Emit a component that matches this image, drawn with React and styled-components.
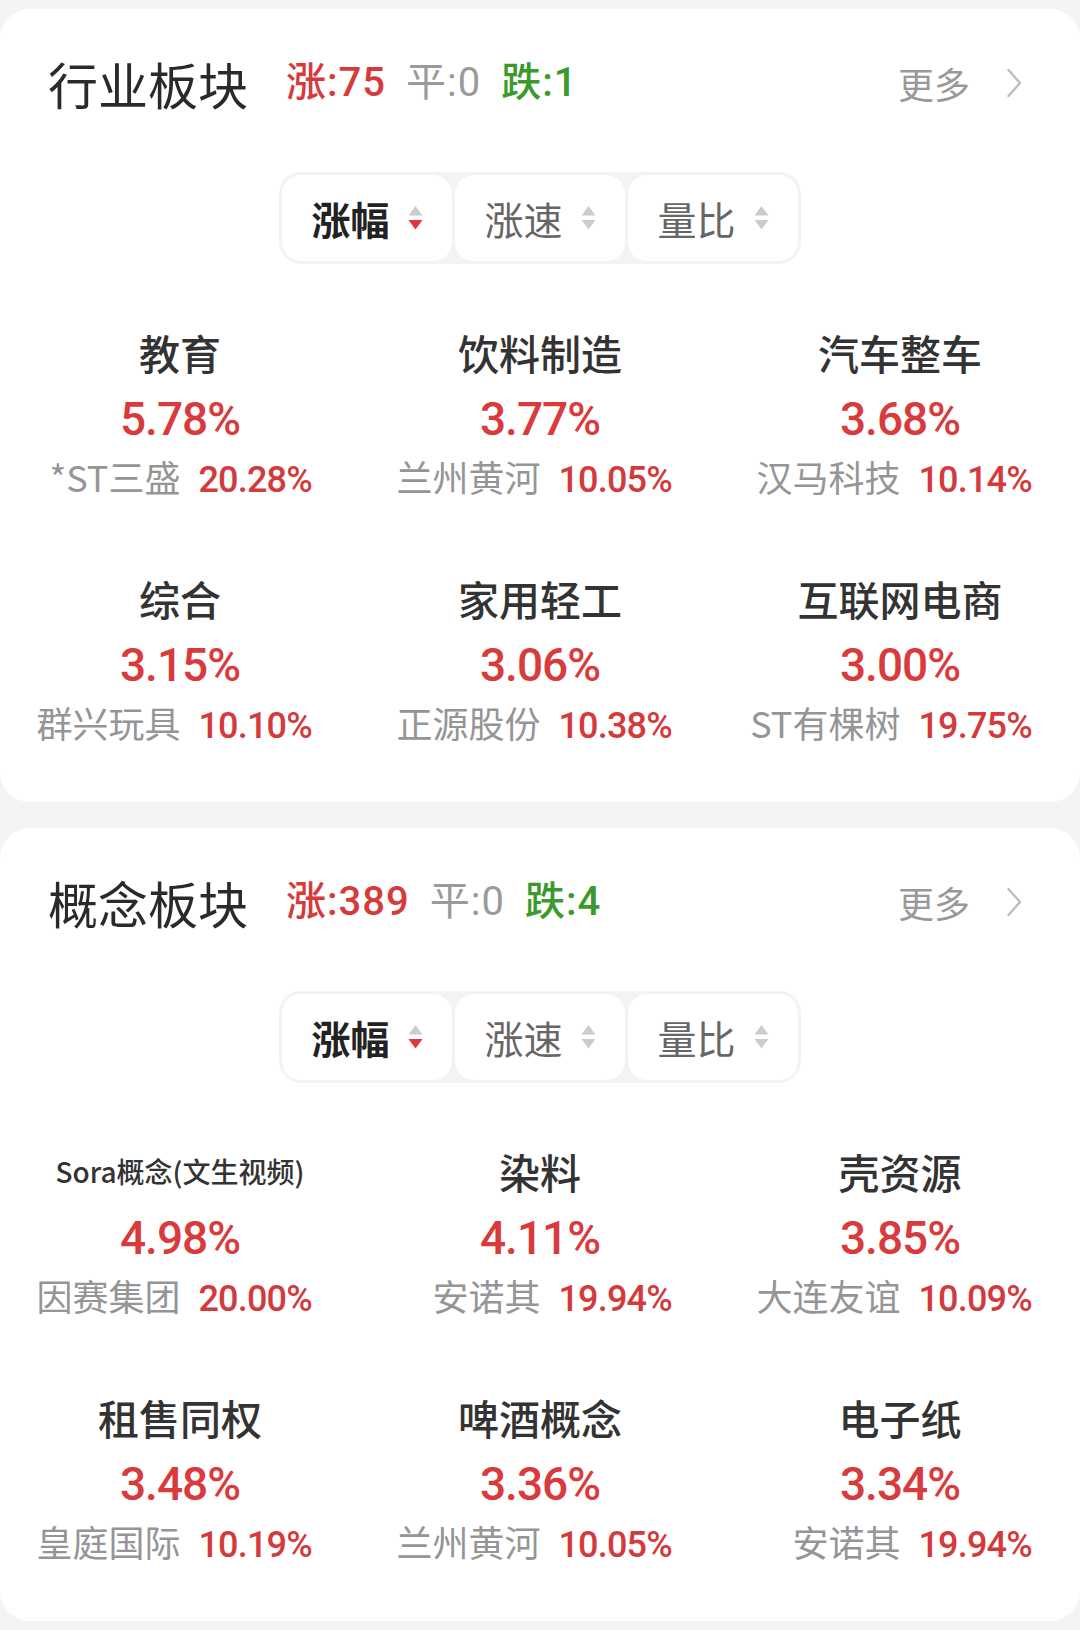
import React from "react";
import styled, { createGlobalStyle } from "styled-components";

const GlobalStyle = createGlobalStyle`
  html, body { margin: 0; padding: 0; background: #f4f4f4; }
  body {
    font-family: "Noto Sans CJK SC", "Noto Sans", sans-serif;
    -webkit-font-smoothing: antialiased;
  }
`;

const NUM = `"Roboto", "Noto Sans CJK SC", sans-serif`;

const Page = styled.div`
  display: flex;
  flex-direction: column;
  gap: 26px;
  padding: 9px 0 8px;
`;

const Card = styled.section`
  background: #fff;
  border-radius: 30px;
  height: 793px;
  box-sizing: border-box;
  padding: 44px 0 57px;
`;

const Header = styled.div`
  display: flex;
  align-items: center;
  height: 60px;
  padding: 0 58px 0 48px;
`;

const Title = styled.h2`
  margin: 0;
  font-size: 50px;
  line-height: 60px;
  font-weight: 400;
  color: #2a2a2a;
`;

const Stats = styled.div`
  display: flex;
  align-items: center;
  gap: 20px;
  margin-left: 38px;
`;

const toneColor = { up: "#d63b3b", flat: "#9a9a9a", down: "#3a9a2c" };

const Stat = styled.span`
  font-family: ${NUM};
  font-size: 40px;
  line-height: 60px;
  letter-spacing: 1px;
  font-weight: ${(p) => (p.$tone === "flat" ? 400 : 500)};
  color: ${(p) => toneColor[p.$tone]};
`;

const More = styled.div`
  margin-left: auto;
  display: flex;
  align-items: center;
  gap: 36px;
  font-size: 36px;
  color: #999;
`;

const TabsRow = styled.div`
  display: flex;
  justify-content: center;
  margin-top: 59px;
`;

const Tabs = styled.div`
  display: flex;
  gap: 3px;
  padding: 3px;
  background: #f3f3f3;
  border-radius: 22px;
`;

const Tab = styled.div`
  width: 170px;
  height: 86px;
  background: #fff;
  border-radius: 19px;
  display: flex;
  align-items: center;
  justify-content: center;
  gap: 18px;
  font-size: 39px;
  font-weight: ${(p) => (p.$active ? 700 : 400)};
  color: ${(p) => (p.$active ? "#222" : "#666")};
`;

const Grid = styled.div`
  margin-top: 59px;
  display: grid;
  grid-template-columns: repeat(3, 1fr);
  row-gap: 70px;
`;

const Item = styled.div`
  display: flex;
  flex-direction: column;
  align-items: center;
  white-space: nowrap;
`;

const Name = styled.div`
  height: 60px;
  line-height: 58px;
  font-size: ${(p) => (p.$small ? "28px" : "41px")};
  font-weight: 500;
  color: #333;
`;

const Pct = styled.div`
  height: 72px;
  line-height: 72px;
  font-family: ${NUM};
  font-size: 46px;
  font-weight: 500;
  color: #d93a3c;
  letter-spacing: -1px;
`;

const Sub = styled.div`
  width: 264px;
  height: 44px;
  line-height: 42px;
  display: flex;
  align-items: baseline;
  justify-content: flex-end;
  & > span { flex-shrink: 0; }
`;

const SubName = styled.span`
  font-size: 36px;
  color: #959595;
`;

const SubPct = styled.span`
  margin-left: 18px;
  font-family: ${NUM};
  font-size: 36px;
  font-weight: 500;
  color: #d43a3c;
  letter-spacing: -0.8px;
`;

const SortIcon = ({ active }) => (
  <svg width="15" height="26" viewBox="0 0 15 26" aria-hidden="true">
    <path d="M7.5 1 L14.5 10.5 L0.5 10.5 Z" fill="#cccccc" />
    <path d="M0.5 15 L14.5 15 L7.5 24.5 Z" fill={active ? "#e0363c" : "#cccccc"} />
  </svg>
);

const Chevron = () => (
  <svg width="16" height="32" viewBox="0 0 16 32" aria-hidden="true">
    <path d="M2.5 3 L14 16 L2.5 29" fill="none" stroke="#bdbdbd" strokeWidth="2.4" strokeLinecap="round" strokeLinejoin="round" />
  </svg>
);

const sections = [
  {
    title: "行业板块",
    up: 75,
    flat: 0,
    down: 1,
    items: [
      { name: "教育", pct: "5.78%", sub: "*ST三盛", subPct: "20.28%" },
      { name: "饮料制造", pct: "3.77%", sub: "兰州黄河", subPct: "10.05%" },
      { name: "汽车整车", pct: "3.68%", sub: "汉马科技", subPct: "10.14%" },
      { name: "综合", pct: "3.15%", sub: "群兴玩具", subPct: "10.10%" },
      { name: "家用轻工", pct: "3.06%", sub: "正源股份", subPct: "10.38%" },
      { name: "互联网电商", pct: "3.00%", sub: "ST有棵树", subPct: "19.75%" },
    ],
  },
  {
    title: "概念板块",
    up: 389,
    flat: 0,
    down: 4,
    items: [
      { name: "Sora概念(文生视频)", small: true, pct: "4.98%", sub: "因赛集团", subPct: "20.00%" },
      { name: "染料", pct: "4.11%", sub: "安诺其", subPct: "19.94%" },
      { name: "壳资源", pct: "3.85%", sub: "大连友谊", subPct: "10.09%" },
      { name: "租售同权", pct: "3.48%", sub: "皇庭国际", subPct: "10.19%" },
      { name: "啤酒概念", pct: "3.36%", sub: "兰州黄河", subPct: "10.05%" },
      { name: "电子纸", pct: "3.34%", sub: "安诺其", subPct: "19.94%" },
    ],
  },
];

const tabs = ["涨幅", "涨速", "量比"];

export default function App() {
  return (
    <>
      <GlobalStyle />
      <Page>
        {sections.map((s) => (
          <Card key={s.title}>
            <Header>
              <Title>{s.title}</Title>
              <Stats>
                <Stat $tone="up">涨:{s.up}</Stat>
                <Stat $tone="flat">平:{s.flat}</Stat>
                <Stat $tone="down">跌:{s.down}</Stat>
              </Stats>
              <More>
                <span>更多</span>
                <Chevron />
              </More>
            </Header>
            <TabsRow>
              <Tabs>
                {tabs.map((t, i) => (
                  <Tab key={t} $active={i === 0}>
                    <span>{t}</span>
                    <SortIcon active={i === 0} />
                  </Tab>
                ))}
              </Tabs>
            </TabsRow>
            <Grid>
              {s.items.map((it) => (
                <Item key={it.name}>
                  <Name $small={it.small}>{it.name}</Name>
                  <Pct>{it.pct}</Pct>
                  <Sub>
                    <SubName>{it.sub}</SubName>
                    <SubPct>{it.subPct}</SubPct>
                  </Sub>
                </Item>
              ))}
            </Grid>
          </Card>
        ))}
      </Page>
    </>
  );
}
